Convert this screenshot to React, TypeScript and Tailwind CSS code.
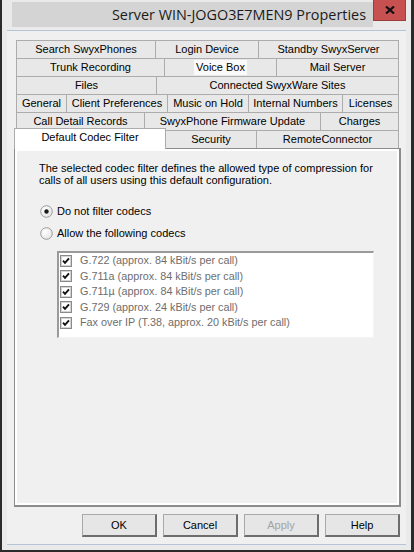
import React from "react";

const ui = { fontFamily: '"Liberation Sans", Arial, sans-serif' };

type TabDef = { label: string; cls: string; hot?: boolean };

const rows: TabDef[][] = [
  [
    { label: "Search SwyxPhones", cls: "w-[139px]" },
    { label: "Login Device", cls: "w-[103px]" },
    { label: "Standby SwyxServer", cls: "w-[141px] border-r" },
  ],
  [
    { label: "Trunk Recording", cls: "w-[148px]" },
    { label: "Voice Box", cls: "w-[112px]", hot: true },
    { label: "Mail Server", cls: "w-[123px] border-r" },
  ],
  [
    { label: "Files", cls: "w-[140px]" },
    { label: "Connected SwyxWare Sites", cls: "w-[243px] border-r" },
  ],
  [
    { label: "General", cls: "w-[50px]" },
    { label: "Client Preferences", cls: "w-[101px]" },
    { label: "Music on Hold", cls: "w-[81px]" },
    { label: "Internal Numbers", cls: "w-[94px]" },
    { label: "Licenses", cls: "w-[57px] border-r" },
  ],
  [
    { label: "Call Detail Records", cls: "w-[128px]" },
    { label: "SwyxPhone Firmware Update", cls: "w-[176px]" },
    { label: "Charges", cls: "w-[79px] border-r" },
  ],
];

const codecs = [
  { label: "G.722 (approx. 84 kBit/s per call)", h: "h-[15px]" },
  { label: "G.711a (approx. 84 kBit/s per call)", h: "h-[16px]" },
  { label: "G.711\u00b5 (approx. 84 kBit/s per call)", h: "h-[15px]" },
  { label: "G.729 (approx. 24 kBit/s per call)", h: "h-[16px]" },
  { label: "Fax over IP (T.38, approx. 20 kBit/s per call)", h: "h-[15px]" },
];

function Radio({ checked }: { checked?: boolean }) {
  return (
    <svg width="13" height="13" viewBox="0 0 13 13" className="shrink-0">
      <defs>
        <radialGradient id="rg" cx="0.35" cy="0.35" r="0.8">
          <stop offset="0" stopColor="#ffffff" />
          <stop offset="1" stopColor="#e2e2e2" />
        </radialGradient>
      </defs>
      <circle cx="6.5" cy="6.5" r="5.8" fill="url(#rg)" stroke="#9a9a9a" strokeWidth="1" />
      {checked && <circle cx="6.5" cy="6.5" r="2.2" fill="#1a1a1a" />}
    </svg>
  );
}

function Check() {
  return (
    <svg width="12" height="12" viewBox="0 0 12 12" className="shrink-0">
      <rect x="0.5" y="0.5" width="11" height="11" fill="#ffffff" stroke="#8a8a8a" />
      <rect x="1.5" y="1.5" width="9" height="9" fill="none" stroke="#d4d4d4" />
      <path d="M3 5.6 L5 7.8 L9 3.4" fill="none" stroke="#111" strokeWidth="1.9" />
    </svg>
  );
}

function Button({ label, cls, disabled }: { label: string; cls?: string; disabled?: boolean }) {
  return (
    <div
      className={`flex h-[23px] w-[75px] items-center justify-center border border-[#a9a9a9] border-b-2 border-r-2 border-b-[#6d6d6d] border-r-[#6d6d6d] bg-[#e6e6e6] text-[11px] ${
        disabled ? "text-[#a3a3a3]" : "text-black"
      } ${cls ?? ""}`}
    >
      {label}
    </div>
  );
}

export default function App() {
  return (
    <div
      style={ui}
      className="flex h-[552px] w-[414px] flex-col border-b-2 border-l-2 border-r-[3px] border-[#2b2b2b] bg-[#eaeaea] text-black"
    >
      {/* title bar */}
      <div className="flex h-[30px] shrink-0 pl-[10px] pr-[5px]">
        <div
          className="mt-[2px] flex h-[25px] flex-1 items-center justify-end bg-[#d4d4d4] pr-[7px] text-[14.4px] text-[#1b1b1b]"
          style={{ fontFamily: '"Open Sans", "Noto Sans", sans-serif' }}
        >
          Server WIN-JOGO3E7MEN9 Properties
        </div>
        <div className="flex h-[21px] w-[33px] items-center justify-center border border-t-0 border-[#9a3e3e] bg-[#c75050]">
          <svg width="10" height="8" viewBox="0 0 10 8">
            <path d="M1 0.5 L9 7.5 M9 0.5 L1 7.5" stroke="#111" strokeWidth="2.2" />
          </svg>
        </div>
      </div>

      {/* client area */}
      <div className="mx-[5px] flex flex-1 flex-col border-y border-[#b7c3d6] bg-[#f0f0f0] pt-[9px]">
        {rows.map((row, i) => (
          <div key={i} className="ml-[9px] flex h-[18px]">
            {row.map((t) => (
              <div
                key={t.label}
                className={`flex h-[18px] items-center justify-center border-l border-t border-[#acacac] bg-[#e8e8e8] text-[11px] leading-none ${t.cls}`}
              >
                {t.hot ? <span className="bg-[#fafafa] px-[2px] py-[2px]">{t.label}</span> : t.label}
              </div>
            ))}
          </div>
        ))}

        {/* last tab row with the selected tab */}
        <div className="ml-[7px] flex h-[18px] items-end">
          <div className="relative z-10 -mb-px flex h-[21px] w-[152px] items-start justify-center border-x border-t border-[#acacac] bg-white pt-[3px] text-[11px] leading-none">
            Default Codec Filter
          </div>
          <div className="flex h-[18px] w-[90px] items-center justify-center border-t border-[#acacac] bg-[#e8e8e8] text-[11px] leading-none">
            Security
          </div>
          <div className="flex h-[18px] w-[143px] items-center justify-center border-l border-r border-t border-[#acacac] bg-[#e8e8e8] text-[11px] leading-none">
            RemoteConnector
          </div>
        </div>

        {/* tab page */}
        <div className="ml-[7px] h-[359px] w-[387px] border border-b-2 border-r-2 border-[#8c8c8c] bg-white p-[2px]">
          <div className="h-full bg-[#f0f0f0] pl-[22px] pt-[11px] text-[11px]">
            <p className="leading-[12px]">
              The selected codec filter defines the allowed type of compression for
              <br />
              calls of all users using this default configuration.
            </p>
            <div className="mt-[14px] flex h-[22px] items-center gap-[4px] pl-[1px]">
              <Radio checked />
              <span>Do not filter codecs</span>
            </div>
            <div className="flex h-[22px] items-center gap-[4px] pl-[1px]">
              <Radio />
              <span>Allow the following codecs</span>
            </div>
            <div className="ml-[18px] mt-[7px] h-[87px] w-[317px] border-2 border-b border-r border-[#9a9a9a] border-b-[#f4f4f4] border-r-[#f4f4f4] bg-white pl-[1px] text-[10.8px] text-[#6d6d6d]">
              {codecs.map((c) => (
                <div key={c.label} className={`flex items-center gap-[8px] ${c.h}`}>
                  <Check />
                  <span>{c.label}</span>
                </div>
              ))}
            </div>
          </div>
        </div>

        {/* dialog buttons */}
        <div className="mt-[7px] flex justify-end gap-[6px] pr-[6px]">
          <Button label="OK" cls="border-[#5a5a5a]" />
          <Button label="Cancel" />
          <Button label="Apply" disabled />
          <Button label="Help" />
        </div>
      </div>
      <div className="h-[5px] shrink-0" />
    </div>
  );
}
